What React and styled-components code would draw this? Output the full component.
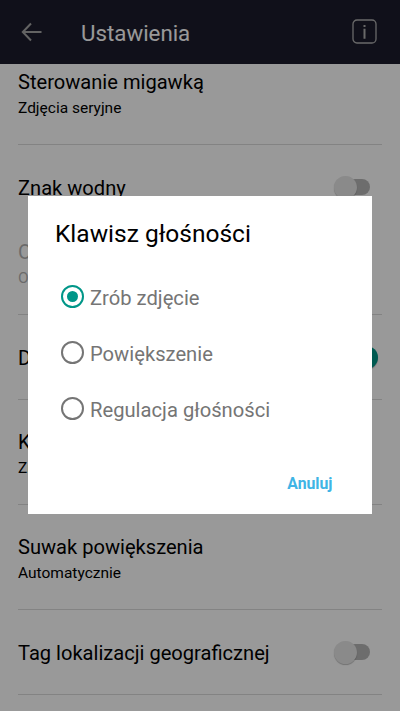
import React, { useState } from "react";
import styled, { createGlobalStyle, css } from "styled-components";

const GlobalStyle = createGlobalStyle`
    * {
        box-sizing: border-box;
    }
    body {
        margin: 0;
        font-family: Roboto, "Liberation Sans", sans-serif;
        color: #000;
    }
`;

const Screen = styled.div`
    position: relative;
    width: 100%;
    height: 711px;
    overflow: hidden;
    display: flex;
    flex-direction: column;
    background: #fff;
`;

const HeaderElement = styled.header`
    flex: none;
    display: flex;
    align-items: center;
    height: 64px;
    padding: 0 23px 1px 21px;
    background: #1c1c2c;
    color: #fff;
`;

const HeaderTitle = styled.h1`
    flex: 1;
    margin: 3px 0 0 38px;
    font-size: 22.3px;
    font-weight: 400;
    line-height: 27px;
`;

const List = styled.main`
    flex: 1;
    padding: 0 18px;
`;

const Row = styled.section`
    display: flex;
    justify-content: space-between;
    height: ${props => props.$height}px;
    padding-top: ${props => props.$top}px;
    opacity: ${props => props.$disabled ? 0.3 : 1};
`;

const Divider = styled.hr`
    height: 1px;
    margin: 0;
    border: 0;
    background: #dadada;
`;

const Label = styled.div`
    font-size: 20.1px;
    line-height: 24px;
`;

const SubLabel = styled.div`
    margin-top: 5px;
    font-size: 15.5px;
    line-height: 18px;
`;

const Track = styled.div`
    display: flex;
    align-items: center;
    justify-content: ${props => props.$on ? 'flex-end' : 'flex-start'};
    width: 34px;
    height: 16px;
    margin: 3px 12px 0 0;
    border-radius: 8px;
    background: ${props => props.$on ? '#8fd0c9' : '#b6b6b6'};
`;

const Thumb = styled.span`
    flex: none;
    width: 23px;
    height: 23px;
    margin: 0 -2px;
    border-radius: 50%;
    background: #e6e6e6;
    box-shadow: 0 1px 1px rgba(0,0,0,.25);

    ${props => props.$on && css`
        margin-right: -8px;
        background: #009688;
    `}
`;

const Overlay = styled.div`
    position: absolute;
    inset: 0;
    display: flex;
    align-items: flex-start;
    justify-content: center;
    padding-top: 196px;
    background: rgba(0,0,0,.4);
`;

const Dialog = styled.div`
    display: flex;
    flex-direction: column;
    width: 344px;
    height: 318px;
    padding: 23px 39.5px 17px 27px;
    background: #fff;
`;

const DialogTitle = styled.h2`
    margin: 0 0 20px;
    font-size: 24.5px;
    font-weight: 400;
    line-height: 30px;
`;

const Option = styled.label`
    display: flex;
    align-items: center;
    height: 56px;
    padding-left: 6px;
    color: #757575;
    font-size: 20.2px;
    cursor: pointer;

    span {
        margin: 2px 0 0 6px;
    }
`;

const Radio = styled.input`
    flex: none;
    appearance: none;
    display: grid;
    place-items: center;
    width: 23px;
    height: 23px;
    margin: 0 0 1px;
    border: 2px solid #757575;
    border-radius: 50%;

    &:checked {
        border-color: #009688;
    }
    &:checked::before {
        content: "";
        width: 11px;
        height: 11px;
        border-radius: 50%;
        background: #009688;
    }
`;

const CancelButton = styled.button`
    align-self: flex-end;
    margin-top: auto;
    padding: 0;
    border: 0;
    background: none;
    color: #40b4e5;
    font-family: inherit;
    font-size: 15.8px;
    font-weight: 700;
    line-height: 26px;
`;

const rows = [
    { label: 'Sterowanie migawką', sub: 'Zdjęcia seryjne', height: 80, top: 6 },
    { label: 'Znak wodny', toggle: 'off', height: 65, top: 31, noDivider: true },
    { label: 'Opis', sub: 'Obraz', disabled: true, height: 104 },
    { label: 'Dźwięk', toggle: 'on', height: 84, top: 31 },
    { label: 'Klawisz głośności', sub: 'Zrób zdjęcie', height: 104 },
    { label: 'Suwak powiększenia', sub: 'Automatycznie', height: 104 },
    { label: 'Tag lokalizacji geograficznej', toggle: 'off', height: 84, top: 31 },
];

const options = ['Zrób zdjęcie', 'Powiększenie', 'Regulacja głośności'];

const Header = () => (
    <HeaderElement>
        <svg width="22" height="20" viewBox="0 0 22 20" fill="none" stroke="#a5a5a5" strokeWidth="2">
            <path d="M10 1.5 1.8 10l8.2 8.5M2 10h18.5" />
        </svg>
        <HeaderTitle>Ustawienia</HeaderTitle>
        <svg width="25" height="25" viewBox="0 0 25 25" fill="none" stroke="#b0b0b0">
            <rect x="1" y="1" width="23" height="23" rx="4" strokeWidth="1.3" />
            <path d="M12.5 6v2M12.5 9.7v10" strokeWidth="2" />
        </svg>
    </HeaderElement>
);

const SettingRow = ({ label, sub, toggle, height, top = 30, disabled, noDivider }) => (
    <>
        <Row $height={height} $top={top} $disabled={disabled}>
            <div>
                <Label>{label}</Label>
                {sub && <SubLabel>{sub}</SubLabel>}
            </div>
            {toggle && (
                <Track $on={toggle === 'on'}>
                    <Thumb $on={toggle === 'on'} />
                </Track>
            )}
        </Row>
        {!noDivider && <Divider />}
    </>
);

const App = () => {
    const [selected, setSelected] = useState(options[0]);

    return (
        <>
            <GlobalStyle />
            <Screen>
                <Header />
                <List>
                    {rows.map(row => <SettingRow key={row.label} {...row} />)}
                </List>
                <Overlay>
                    <Dialog>
                        <DialogTitle>Klawisz głośności</DialogTitle>
                        {options.map(option => (
                            <Option key={option}>
                                <Radio
                                    type="radio"
                                    name="volumeKey"
                                    checked={selected === option}
                                    onChange={() => setSelected(option)}
                                />
                                <span>{option}</span>
                            </Option>
                        ))}
                        <CancelButton>Anuluj</CancelButton>
                    </Dialog>
                </Overlay>
            </Screen>
        </>
    );
};

export default App;
